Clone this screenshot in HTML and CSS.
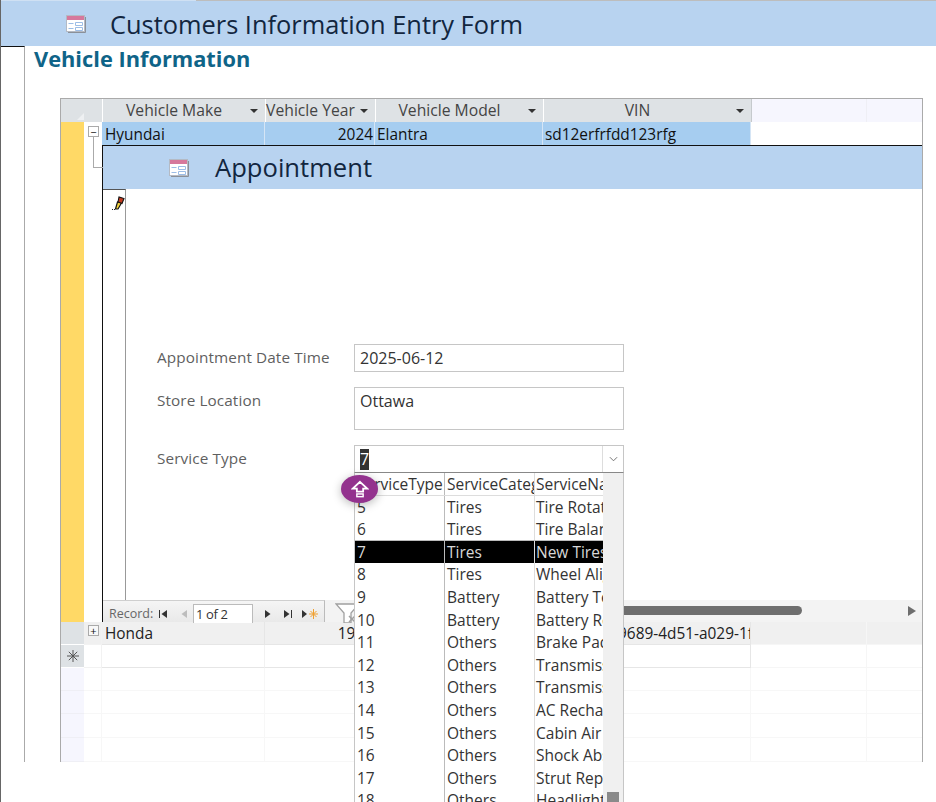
FILE: index.html
```html
<!DOCTYPE html>
<html lang="en">
<head>
<meta charset="utf-8">
<title>Customers Information Entry Form</title>
<link rel="stylesheet" href="styles.css">
</head>
<body>
<div class="app">
  <header class="titlebar">
    <svg class="form-icon" viewBox="0 0 20 18"><rect x="0.5" y="0.5" width="18" height="16" fill="#fff" stroke="#b4bac4"/><rect x="1" y="1" width="17" height="4" fill="#d6789c"/><path d="M2.5 8.5h5M9.5 7.5h7v3h-7zM2.5 13.5h5M9.5 12.5h7v3h-7z" fill="none" stroke="#9cbde6"/><path d="M19.5 2v15.5H2" fill="none" stroke="#8a9099"/></svg>
    <h1 class="title">Customers Information Entry Form</h1>
  </header>
  <div class="main">
    <div class="gutter"></div>
    <div class="content">
      <h2 class="section">Vehicle Information</h2>
      <div class="sheet">
        <div class="row head">
          <div class="corner"><span class="corner-mark"></span></div>
          <div class="hcell">Vehicle Make<i class="caret"></i></div>
          <div class="hcell">Vehicle Year<i class="caret"></i></div>
          <div class="hcell">Vehicle Model<i class="caret"></i></div>
          <div class="hcell">VIN<i class="caret"></i></div>
          <div class="hblank"></div>
          <div class="hblank last"></div>
        </div>
        <div class="nest">
          <div class="selector-col"></div>
          <div class="nest-main">
            <div class="row-active">
              <div class="tree"><span class="box">&minus;</span></div>
              <div class="cell sel first-cell">Hyundai</div>
              <div class="cell sel num">2024</div>
              <div class="cell sel">Elantra</div>
              <div class="cell sel">sd12erfrfdd123rfg</div>
            </div>
            <div class="sub-wrap">
              <div class="tree-line"></div>
              <div class="sub">
                <div class="sub-band">
                  <svg class="form-icon" viewBox="0 0 20 18"><rect x="0.5" y="0.5" width="18" height="16" fill="#fff" stroke="#b4bac4"/><rect x="1" y="1" width="17" height="4" fill="#d6789c"/><path d="M2.5 8.5h5M9.5 7.5h7v3h-7zM2.5 13.5h5M9.5 12.5h7v3h-7z" fill="none" stroke="#9cbde6"/><path d="M19.5 2v15.5H2" fill="none" stroke="#8a9099"/></svg>
                  <h3 class="sub-title">Appointment</h3>
                </div>
                <div class="sub-body">
                  <div class="rec-col">
                    <svg class="pencil" viewBox="0 0 16 16"><path d="M5.500 13l2-7 4 1-3.500 6z" fill="#f2d23c" stroke="#111" stroke-width="1.200"/><path d="M8 6l1-5 5 1.500-2 5z" fill="#c23a1e" stroke="#111" stroke-width="1.100"/><path d="M2 13.500h1M4 13.500h1" stroke="#222"/></svg>
                  </div>
                  <div class="form">
                    <div class="field date-field">
                      <label class="lbl">Appointment Date Time</label>
                      <div class="input">2025-06-12</div>
                    </div>
                    <div class="field store-field">
                      <label class="lbl">Store Location</label>
                      <div class="input tall">Ottawa</div>
                    </div>
                    <div class="field service-field">
                      <label class="lbl">Service Type</label>
                      <div class="combo">
                        <div class="input combo-box"><span class="picked">7</span><span class="combo-btn"><svg viewBox="0 0 10 6" class="chev"><path d="M1 1l4 4 4-4" fill="none" stroke="#666"/></svg></span></div>
                        <div class="list">
                          <div class="list-cols">
                            <div class="lrow lhead"><span>ServiceType</span><span>ServiceCategory</span><span>ServiceName</span></div>
                            <div class="lrow"><span>5</span><span>Tires</span><span>Tire Rotation</span></div>
                            <div class="lrow under"><span>6</span><span>Tires</span><span>Tire Balancing</span></div>
                            <div class="lrow on"><span>7</span><span>Tires</span><span>New Tires</span></div>
                            <div class="lrow"><span>8</span><span>Tires</span><span>Wheel Alignment</span></div>
                            <div class="lrow"><span>9</span><span>Battery</span><span>Battery Test</span></div>
                            <div class="lrow"><span>10</span><span>Battery</span><span>Battery Replace</span></div>
                            <div class="lrow"><span>11</span><span>Others</span><span>Brake Pads</span></div>
                            <div class="lrow"><span>12</span><span>Others</span><span>Transmission</span></div>
                            <div class="lrow"><span>13</span><span>Others</span><span>Transmission</span></div>
                            <div class="lrow"><span>14</span><span>Others</span><span>AC Recharge</span></div>
                            <div class="lrow"><span>15</span><span>Others</span><span>Cabin Air Filter</span></div>
                            <div class="lrow"><span>16</span><span>Others</span><span>Shock Absorber</span></div>
                            <div class="lrow"><span>17</span><span>Others</span><span>Strut Repair</span></div>
                            <div class="lrow"><span>18</span><span>Others</span><span>Headlights</span></div>
                          </div>
                          <div class="list-bar"><i class="list-thumb"></i></div>
                        </div>
                        <div class="badge"><svg viewBox="0 0 20 20" class="badge-icon"><path d="M10 2L18 9.500h-4.500V13h-7V9.500H2z" fill="none" stroke="#fff" stroke-width="2" stroke-linejoin="miter"/><rect x="6.500" y="15.500" width="7" height="3" fill="none" stroke="#fff" stroke-width="1.600"/></svg></div>
                      </div>
                    </div>
                  </div>
                </div>
                <div class="nav">
                  <div class="nav-left">
                    <span class="rec-label">Record:</span>
                    <svg class="nb first" viewBox="0 0 10 10"><path d="M1.500 1v8" stroke="#333"/><path d="M9 1v8L3.500 5z" fill="#333"/></svg>
                    <svg class="nb prev" viewBox="0 0 10 10"><path d="M8 1v8L2.500 5z" fill="#bdbdbd"/></svg>
                    <span class="rec-box">1 of 2</span>
                    <svg class="nb next" viewBox="0 0 10 10"><path d="M2 1v8l5.500-4z" fill="#333"/></svg>
                    <svg class="nb last-btn" viewBox="0 0 10 10"><path d="M1 1v8l5.500-4z" fill="#333"/><path d="M8.500 1v8" stroke="#333"/></svg>
                    <svg class="nb new" viewBox="0 0 18 10"><path d="M1 1v8l5-4z" fill="#333"/><path d="M12.500 0v10M8 5h9M9.500 2l6 6M15.500 2l-6 6" stroke="#f0a030"/></svg>
                  </div>
                  <div class="nav-right">
                    <svg class="funnel" viewBox="0 0 26 20"><path d="M1 1h23l-8 9v10H9V10z" fill="#fff" stroke="#a0a0a0" stroke-width="1.300"/><path d="M14 13l6 6M20 13l-6 6" stroke="#a0a0a0" stroke-width="1.500"/></svg>
                    <div class="hscroll"><i class="hthumb"></i><svg class="harrow" viewBox="0 0 10 12"><path d="M1 1v10l8-5z" fill="#6e6e6e"/></svg></div>
                  </div>
                </div>
              </div>
            </div>
          </div>
        </div>
        <div class="row plain other">
          <div class="rsel"></div>
          <div class="tree flat"><span class="box small-box">+</span></div>
          <div class="cell first-cell">Honda</div>
          <div class="cell num">1998</div>
          <div class="cell">Accord</div>
          <div class="cell clip">3f5a7c21-9689-4d51-a029-1f3e8b7a6c2d</div>
          <div class="blank"></div>
          <div class="blank"></div>
        </div>
        <div class="row plain newrow">
          <div class="rsel star"><svg viewBox="0 0 12 12" class="star-icon"><path d="M6 0v12M0 6h12M1.800 1.800l8.400 8.400M10.200 1.800l-8.400 8.400" stroke="#555"/></svg></div>
          <div class="tree flat"></div>
          <div class="cell"></div><div class="cell"></div><div class="cell"></div><div class="cell"></div>
          <div class="blank"></div><div class="blank"></div>
        </div>
        <div class="row plain empty"><div class="rsel soft"></div><div class="tree flat"></div><div class="cell"></div><div class="cell"></div><div class="cell"></div><div class="cell"></div><div class="blank"></div><div class="blank"></div></div>
        <div class="row plain empty"><div class="rsel soft"></div><div class="tree flat"></div><div class="cell"></div><div class="cell"></div><div class="cell"></div><div class="cell"></div><div class="blank"></div><div class="blank"></div></div>
        <div class="row plain empty wide"><div class="rsel soft"></div><div class="tree flat"></div><div class="cell"></div><div class="cell"></div><div class="cell"></div><div class="cell"></div><div class="blank"></div><div class="blank"></div></div>
        <div class="row plain empty wide"><div class="rsel soft"></div><div class="tree flat"></div><div class="cell"></div><div class="cell"></div><div class="cell"></div><div class="cell"></div><div class="blank"></div><div class="blank"></div></div>
      </div>
    </div>
  </div>
</div>
</body>
</html>
```
FILE: styles.css
```css
* { box-sizing: border-box; }
html, body { margin: 0; padding: 0; height: 802px; overflow: hidden; background: #fff; }
body { font-family: "Open Sans", "Noto Sans", sans-serif; color: #222; }
.app { height: 802px; width: 936px; border-left: 1px solid #666; overflow: hidden; }

.titlebar { height: 46px; padding-left: 65px; display: flex; align-items: center; background: #b8d3f0; border-top: 1px solid; border-image: linear-gradient(90deg, #cfe0f3 196px, #bdbdbd 196px) 1; }
.form-icon { width: 20px; height: 18px; flex: none; }
.title { margin: 0 0 0 24px; font-size: 25.4px; line-height: 32px; font-weight: 400; color: #12263f; }

.main { display: flex; height: 716px; margin-left: -1px; }
.gutter { width: 25px; flex: none; border-top: 1px solid #111; border-right: 1px solid #aaa; }
.content { flex: 1; min-width: 0; padding-left: 9px; }
.section { margin: 0; height: 52px; font-size: 21.8px; line-height: 26px; font-weight: 700; color: #0f6488; }

.sheet { width: 863px; height: 664px; margin-left: 26px; border: 1px solid #aaa; border-bottom: 0; font-size: 15.4px; overflow: visible; }
.row { display: grid; grid-template-columns: 23px 18px 163px 110px 168px 208px 116px 1fr; }
.head { grid-template-columns: 41px 163px 110px 168px 208px 116px 1fr; height: 23px; background: #f6f6fe; }
.corner { background: #dee2e5; position: relative; }
.corner-mark { position: absolute; right: 18px; bottom: 2px; border-style: solid; border-width: 0 0 7px 7px; border-color: transparent transparent #eef0f2 transparent; }
.hcell { background: #dee2e5; border-left: 1px solid #fff; border-right: 1px solid #c6cacd; position: relative; text-align: center; line-height: 23px; color: #444; padding-right: 20px; white-space: nowrap; margin-right: -1px; font-size: 15.7px; }
.caret { position: absolute; right: 7px; top: 10px; border-style: solid; border-width: 4px 4px 0; border-color: #333 transparent transparent; }
.hblank { background: #f6f6fe; border-right: 1px solid #efeff5; }
.hblank.last { border-right: 0; }

.nest { display: flex; height: 500px; }
.selector-col { width: 23px; flex: none; background: #ffd966; }
.nest-main { flex: 1; min-width: 0; display: flex; flex-direction: column; }
.row-active { display: grid; grid-template-columns: 18px 163px 110px 168px 208px; height: 23px; flex: none; }
.tree { position: relative; }
.box { position: absolute; left: 4px; top: 4px; width: 11px; height: 11px; border: 1px solid #aaa; background: #fff; font-size: 11px; line-height: 9px; text-align: center; color: #111; }
.cell { height: 100%; padding-left: 2px; line-height: 23px; white-space: nowrap; overflow: hidden; color: #222; border-right: 1px solid #f2f2f2; border-bottom: 1px solid #f2f2f2; }
.first-cell { padding-left: 3px; }
.sel { background: #a6cdf0; border-right-color: #d5e5f5; border-bottom: 0; color: #111; line-height: 25px; }
.num { text-align: right; padding: 0 1px 0 0; }
.clip { padding-left: 5px; }

.sub-wrap { flex: 1; display: flex; min-height: 0; }
.tree-line { width: 18px; flex: none; position: relative; }
.tree-line::before { content: ""; position: absolute; left: 9px; top: -8px; width: 9px; height: 30px; border-left: 1px solid #aaa; border-bottom: 1px solid #aaa; }
.sub { flex: 1; min-width: 0; display: flex; flex-direction: column; border-top: 1px solid #111; border-left: 1px solid #111; }
.sub-band { height: 43px; flex: none; display: flex; align-items: center; padding-left: 66px; background: #b8d3f0; }
.sub-title { margin: 0 0 0 26px; font-size: 25.6px; line-height: 34px; padding-top: 1px; font-weight: 400; color: #12263f; }

.sub-body { flex: 1; display: flex; min-height: 0; }
.rec-col { width: 23px; flex: none; border-right: 1px solid #999; border-top: 1px solid #555; padding: 6px 0 0 7px; }
.pencil { display: block; width: 16px; height: 16px; }
.form { flex: 1; padding: 155px 0 0 31px; font-size: 15.3px; }
.field { display: flex; }
.date-field { height: 43px; }
.store-field { height: 58px; }
.lbl { width: 197px; flex: none; color: #5f5f5f; line-height: 26px; letter-spacing: .1px; }
.input { width: 270px; height: 28px; padding: 0 5px; border: 1px solid #c6c6c6; font-size: 16px; line-height: 27px; background: #fff; color: #333; }
.input.tall { height: 43px; }
.combo { position: relative; width: 270px; }
.combo-box { height: 28px; display: flex; justify-content: space-between; border-bottom-color: #888; padding: 0 0 0 5px; }
.picked { background: #333; color: #fff; width: 9px; height: 21px; margin-top: 3px; line-height: 21px; }
.combo-btn { width: 21px; height: 100%; border-left: 1px solid #ddd; display: flex; align-items: center; justify-content: center; }
.chev { width: 9px; height: 6px; }
.list { position: absolute; left: 0; top: 27px; width: 270px; height: 340px; display: flex; background: #fff; border-left: 1px solid #c6c6c6; border-right: 1px solid #c6c6c6; border-top: 1px solid #888; z-index: 2; font-size: 15.5px; }
.list-cols { width: 248px; flex: none; }
.lrow { display: grid; grid-template-columns: 90px 90px 68px; height: 22.6px; line-height: 22.6px; white-space: nowrap; color: #333; }
.lrow span { overflow: hidden; padding-left: 2px; border-right: 1px solid #bbb; }
.lrow span:nth-child(2) { border-right-color: #ddd; }
.lrow span:nth-child(3) { border-right: 0; padding-left: 1px; }
.lhead { border-bottom: 1px solid #ddd; }
.under { border-bottom: 1px solid #bbb; }
.on { background: #000; color: #d8d8d8; }
.list-bar { flex: 1; background: #f0f0f0; position: relative; }
.list-thumb { position: absolute; left: 4px; top: 319px; width: 12px; height: 12px; background: #8a8a8a; }
.badge { position: absolute; left: -13px; top: 30px; width: 37px; height: 28px; border-radius: 50%; background: #93328e; box-shadow: 0 2px 10px rgba(0,0,0,.28); display: flex; align-items: center; justify-content: center; z-index: 3; }
.badge-icon { width: 18px; height: 18px; }

.nav { height: 22px; flex: none; display: flex; align-items: stretch; }
.nav-left { width: 222px; flex: none; display: flex; align-items: center; padding: 4px 0 0 6px; background: linear-gradient(#f5f5f5, #e9e9e9); border-top: 1px solid #cfcfcf; border-right: 1px solid #bbb; }
.rec-label { font-size: 12.5px; color: #666; width: 44px; }
.nb { width: 10px; height: 10px; flex: none; }
.first { margin-left: 5px; }
.prev { margin-left: 11px; }
.rec-box { width: 60px; height: 19px; margin: -1px 0 0 4px; padding-left: 2px; border: 1px solid #bbb; border-bottom: 0; background: #fff; font-size: 13px; letter-spacing: -.4px; line-height: 19px; color: #333; }
.next { margin-left: 10px; }
.last-btn { margin-left: 10px; }
.new { width: 18px; margin-left: 8px; }
.nav-right { flex: 1; min-width: 0; display: flex; background: #f3f3f3; }
.funnel { width: 26px; height: 20px; margin: 3px 0 0 10px; flex: none; }
.hscroll { flex: 1; position: relative; }
.hthumb { position: absolute; left: 200px; width: 241px; top: 6px; height: 9px; border-radius: 5px; background: #6e6e6e; }
.harrow { position: absolute; right: 5px; top: 5px; width: 10px; height: 12px; }

.plain { height: 23px; }
.plain.wide { height: 24px; }
.other { background: #f0f0f0; }
.other .cell { border-color: #e6e6e6; }
.rsel { background: #dee2e5; border-bottom: 1px solid #fff; display: flex; align-items: center; justify-content: center; }
.rsel.soft { background: #f6f6fe; border-bottom-color: #efeff5; }
.star-icon { width: 12px; height: 12px; }
.tree.flat { border-bottom: 1px solid #f2f2f2; border-right: 1px solid #f2f2f2; }
.small-box { top: 3px; left: 4px; width: 11px; height: 11px; background: #f8f8f8; line-height: 9px; }
.blank { border-right: 1px solid #f6f6f6; border-bottom: 1px solid #f6f6f6; }
.blank:last-child { border-right: 0; }
.newrow .cell { border-bottom: 1px solid #e6e6e6; }
.newrow .cell:nth-child(6) { border-right: 1px solid #e6e6e6; }
.empty .cell, .empty .blank, .empty .tree.flat { border-color: #f7f7f7; }
```
